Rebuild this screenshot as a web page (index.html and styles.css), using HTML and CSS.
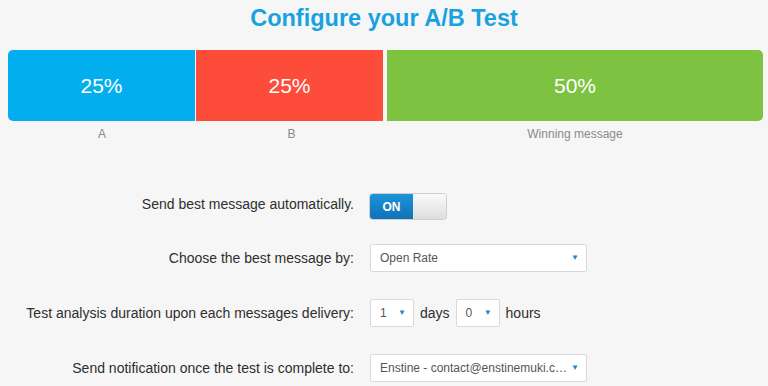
FILE: index.html
```html
<!DOCTYPE html>
<html>
<head>
<meta charset="utf-8">
<link rel="stylesheet" href="styles.css">
</head>
<body>
<div class="page">
  <h1 class="title">Configure your A/B Test</h1>
  <div class="bars">
    <div class="bar bar-a">25%</div>
    <div class="bar bar-b">25%</div>
    <div class="bar bar-win">50%</div>
  </div>
  <div class="bar-labels">
    <div class="lab lab-a">A</div>
    <div class="lab lab-b">B</div>
    <div class="lab lab-win">Winning message</div>
  </div>
  <div class="form">
    <div class="label">Send best message automatically.</div>
    <div class="control">
      <div class="toggle"><span class="on">ON</span><span class="off"></span></div>
    </div>

    <div class="label">Choose the best message by:</div>
    <div class="control">
      <div class="select wide"><span class="val">Open Rate</span><span class="arrow">▼</span></div>
    </div>

    <div class="label">Test analysis duration upon each messages delivery:</div>
    <div class="control">
      <div class="select small"><span class="val">1</span><span class="arrow">▼</span></div>
      <span class="unit">days</span>
      <div class="select small"><span class="val">0</span><span class="arrow">▼</span></div>
      <span class="unit">hours</span>
    </div>

    <div class="label">Send notification once the test is complete to:</div>
    <div class="control">
      <div class="select wide"><span class="val">Enstine - contact@enstinemuki.c…</span><span class="arrow">▼</span></div>
    </div>
  </div>
</div>
</body>
</html>
```

FILE: styles.css
```css
html, body {
  margin: 0;
  padding: 0;
  background: #f6f6f6;
  font-family: "Liberation Sans", Arial, sans-serif;
}
.page {
  width: 768px;
  height: 386px;
  overflow: hidden;
}
.title {
  margin: 0;
  padding-top: 4px;
  height: 50px;
  box-sizing: border-box;
  text-align: center;
  font-size: 23.5px;
  font-weight: bold;
  color: #19a2e0;
  line-height: 28px;
}
.bars {
  display: flex;
  padding: 0 5px 0 8px;
  height: 71px;
}
.bar {
  display: flex;
  align-items: center;
  justify-content: center;
  color: #fff;
  font-size: 21px;
  font-weight: normal;
}
.bar-a {
  width: 187px;
  background: #03aeef;
  border-radius: 5px 0 0 5px;
  margin-right: 1px;
}
.bar-b {
  width: 187px;
  background: #fe4c3b;
  margin-right: 4px;
}
.bar-win {
  flex: 1;
  background: #7dc241;
  border-radius: 0 5px 5px 0;
}
.bar-labels {
  display: flex;
  padding: 0 5px 0 8px;
  height: 57px;
  box-sizing: border-box;
  padding-top: 6px;
}
.lab {
  text-align: center;
  font-size: 12px;
  color: #8a8a8a;
}
.lab-a { width: 188px; }
.lab-b { width: 191px; }
.lab-win { flex: 1; }
.form {
  display: grid;
  grid-template-columns: 354px auto;
  grid-template-rows: 52px 55px 55px 55px;
  column-gap: 16px;
  margin-top: 0;
}
.label {
  text-align: right;
  font-size: 14px;
  color: #2e2e2e;
  align-self: center;
}
.control {
  display: flex;
  align-items: center;
}
.toggle {
  display: flex;
  width: 76px;
  height: 25px;
  margin-top: 5px;
  border-radius: 3px;
  overflow: hidden;
  box-shadow: 0 0 0 1px #cfcfcf;
}
.toggle .on {
  width: 43px;
  background: linear-gradient(#1e93d8, #0f72b6);
  color: #fff;
  font-weight: bold;
  font-size: 12px;
  display: flex;
  align-items: center;
  justify-content: center;
}
.toggle .off {
  flex: 1;
  background: linear-gradient(#fafafa, #dedede);
}
.select {
  display: flex;
  align-items: center;
  justify-content: space-between;
  height: 28px;
  box-sizing: border-box;
  border: 1px solid #d9d9d9;
  border-radius: 2px;
  background: #fff;
  padding: 0 7px 0 9px;
  font-size: 12px;
  color: #555;
}
.select.wide { width: 217px; }
.select.small { width: 44px; }
.arrow {
  color: #1a88c9;
  font-size: 8px;
}
.unit {
  font-size: 14px;
  color: #2e2e2e;
  margin: 0 6px;
}
```
